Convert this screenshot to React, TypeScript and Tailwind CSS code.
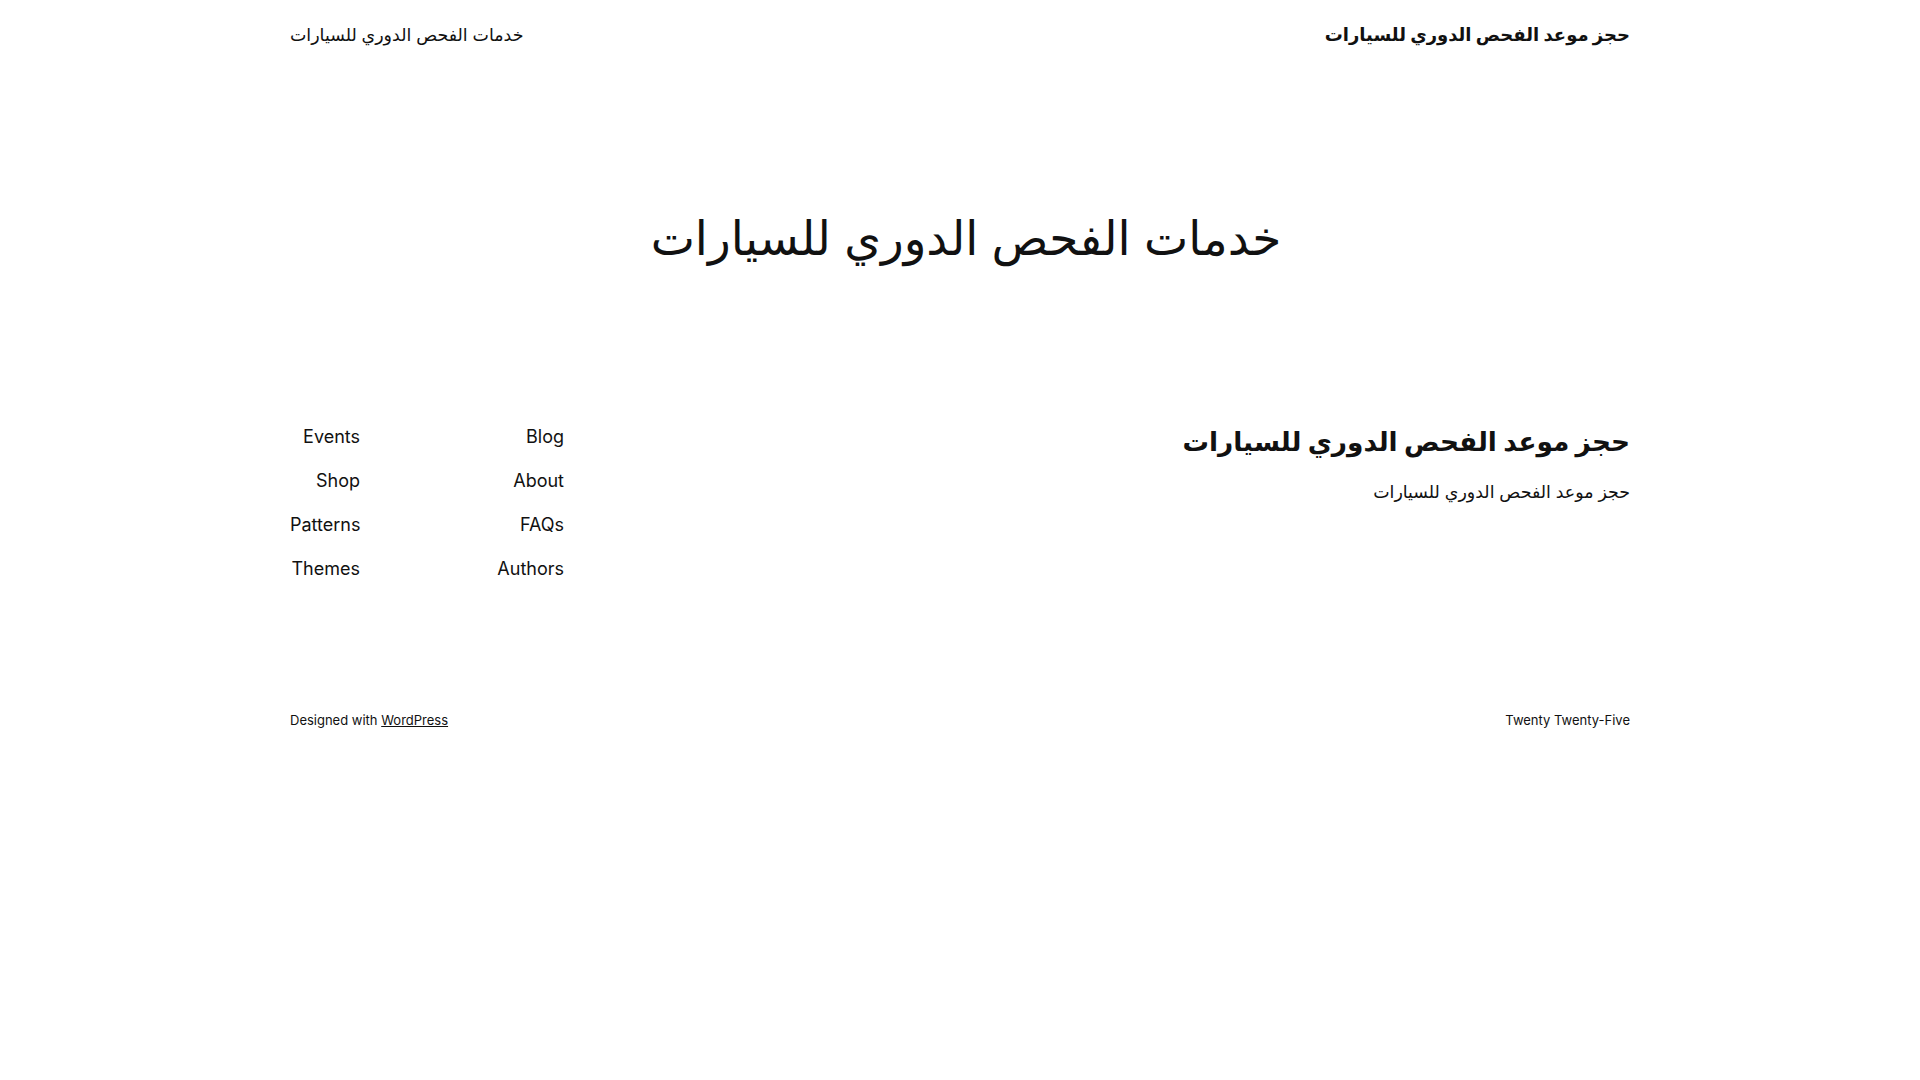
import React from 'react';

const font = { fontFamily: 'Inter, "DejaVu Sans", sans-serif' };

const leftLinks = ['Events', 'Shop', 'Patterns', 'Themes'];
const rightLinks = ['Blog', 'About', 'FAQs', 'Authors'];

export default function App() {
  return (
    <div className="min-h-screen w-full bg-white text-[#111111]" style={font}>
      <div className="mx-auto w-[1340px]">
        {/* Header */}
        <header className="flex h-[68px] items-center justify-between">
          <a className="text-[17.4px] leading-[27px]" dir="rtl">خدمات الفحص الدوري للسيارات</a>
          <a className="text-[18px] font-bold leading-[27px]" dir="rtl">حجز موعد الفحص الدوري للسيارات</a>
        </header>

        {/* Title */}
        <main className="pt-[137px] pb-[144px] pl-[12px]">
          <h1 className="text-center text-[47px] leading-[66px]" dir="rtl">خدمات الفحص الدوري للسيارات</h1>
        </main>

        {/* Footer */}
        <footer>
          <div className="flex items-start justify-between">
            <nav className="flex">
              <ul className="flex w-[70px] flex-col text-right text-[18px] leading-[44px]">
                {leftLinks.map((l) => (
                  <li key={l}>{l}</li>
                ))}
              </ul>
              <ul className="flex w-[204px] flex-col text-right text-[18px] leading-[44px]">
                {rightLinks.map((l) => (
                  <li key={l}>{l}</li>
                ))}
              </ul>
            </nav>
            <div className="flex flex-col items-end pt-[9px] text-right">
              <h2 className="text-[26.4px] font-bold leading-[34px]" dir="rtl">حجز موعد الفحص الدوري للسيارات</h2>
              <p className="mt-[20px] text-[17.4px] leading-[27px]" dir="rtl">حجز موعد الفحص الدوري للسيارات</p>
            </div>
          </div>

          <div className="flex items-center justify-between pt-[119px] text-[13px] leading-[20px]">
            <p>
              Designed with <a className="underline">WordPress</a>
            </p>
            <p>Twenty Twenty-Five</p>
          </div>
        </footer>
      </div>
    </div>
  );
}
